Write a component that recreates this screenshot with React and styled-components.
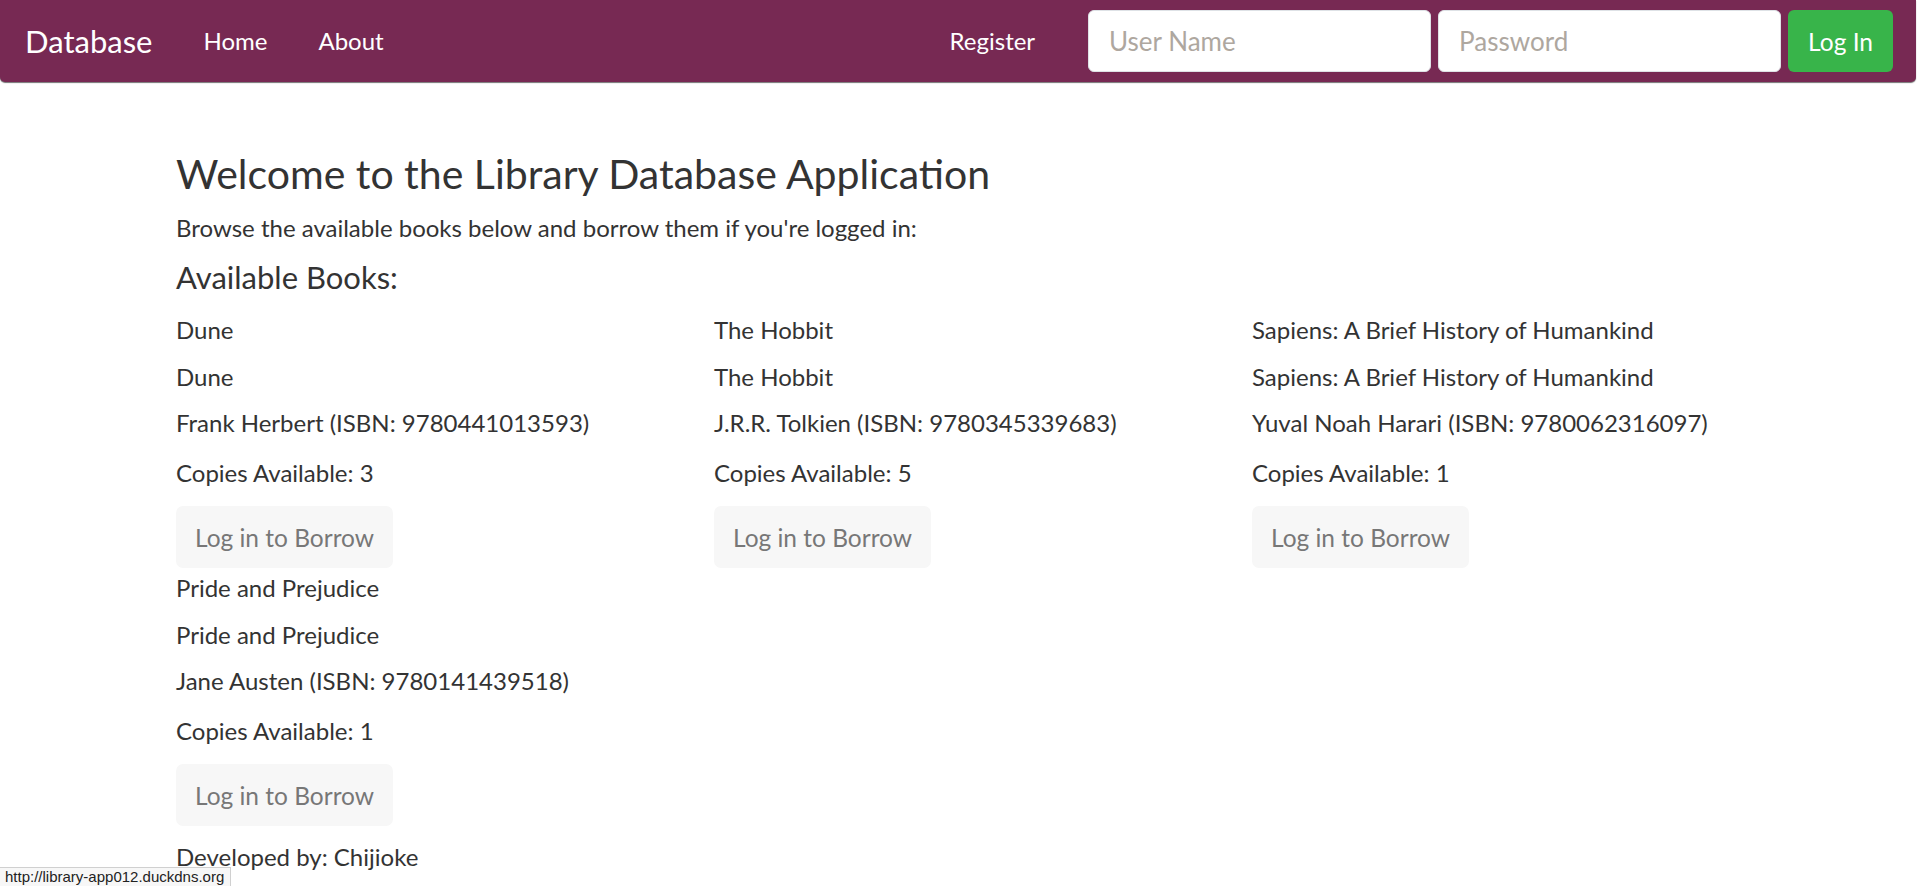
import React from 'react';
import styled, { createGlobalStyle } from 'styled-components';

// Page was captured zoomed in, so sizes below are in screen pixels.

const GlobalStyle = createGlobalStyle`
  html, body {
    margin: 0;
    padding: 0;
    background: #ffffff;
  }
  body {
    font-family: Lato, 'Open Sans', 'Noto Sans', sans-serif;
    font-size: 24px;
    line-height: 36px;
    color: #333333;
  }
  * { box-sizing: border-box; }
`;

const books = [
  { title: 'Dune', author: 'Frank Herbert', isbn: '9780441013593', copies: 3 },
  { title: 'The Hobbit', author: 'J.R.R. Tolkien', isbn: '9780345339683', copies: 5 },
  { title: 'Sapiens: A Brief History of Humankind', author: 'Yuval Noah Harari', isbn: '9780062316097', copies: 1 },
  { title: 'Pride and Prejudice', author: 'Jane Austen', isbn: '9780141439518', copies: 1 },
];

// ─── NAVBAR ──────────────────────────────────────────────

const Navbar = styled.nav`
  display: flex;
  align-items: center;
  height: 82px;
  width: calc(100% - 2px);
  padding: 0 23px 0 25px;
  background: #772953;
  border-radius: 0 0 5px 5px;
  box-shadow: 0 1px 1px rgba(0, 0, 0, 0.55);
`;

const Brand = styled.a`
  font-size: 31px;
  color: #ffffff;
  text-decoration: none;
  margin-right: 51px;
`;

const NavLinks = styled.div`
  display: flex;
  align-items: center;
  gap: 51px;
`;

const NavLink = styled.a`
  font-size: 24px;
  color: #ffffff;
  text-decoration: none;
  cursor: pointer;
`;

const LoginForm = styled.form`
  margin-left: auto;
  display: flex;
  align-items: center;
  gap: 7px;

  ${NavLink} {
    margin-right: 46px;
  }
`;

const Input = styled.input`
  width: 343px;
  height: 62px;
  padding: 0 20px;
  font-family: inherit;
  font-size: 26px;
  color: #333333;
  background: #ffffff;
  border: 1px solid #dee2e6;
  border-radius: 6px;
  outline: none;

  &::placeholder {
    color: #aea79f;
  }
`;

const LoginButton = styled.button`
  height: 62px;
  padding: 0 20px;
  font-family: inherit;
  font-size: 24.5px;
  color: #ffffff;
  background: #38b44a;
  border: none;
  border-radius: 6px;
  cursor: pointer;
`;

// ─── CONTENT ─────────────────────────────────────────────

const Container = styled.main`
  width: 1614px;
  margin-left: 176px;
  padding-top: 67px;
`;

const Title = styled.h2`
  margin: 0 0 12px 0;
  font-size: 41px;
  font-weight: 400;
  line-height: 49px;
`;

const Lead = styled.p`
  margin: 0 0 13px 0;
`;

const SectionTitle = styled.h4`
  margin: 0 0 16px 0;
  font-size: 31px;
  font-weight: 400;
  line-height: 37px;
`;

const BookGrid = styled.div`
  display: grid;
  grid-template-columns: repeat(3, 538px);
`;

const Book = styled.div`
  margin-bottom: 2px;
`;

const Line = styled.p`
  margin: 0 0 ${props => props.gap}px 0;
`;

const BorrowButton = styled.button`
  display: block;
  width: 217px;
  height: 62px;
  font-family: inherit;
  font-size: 24.5px;
  color: #777777;
  background: #f7f7f7;
  border: none;
  border-radius: 7px;
  cursor: default;
`;

const Footer = styled.p`
  margin: 11px 0 0 0;
`;

const StatusBubble = styled.div`
  position: fixed;
  left: 0;
  bottom: 0;
  height: 19px;
  padding: 0 6px 0 5px;
  font-family: 'Liberation Sans', Arial, sans-serif;
  font-size: 15px;
  line-height: 18px;
  color: #222222;
  background: #f7f7f7;
  border-top: 1px solid #d0d0d0;
  border-right: 1px solid #d0d0d0;
`;

export default function App() {
  return (
    <>
      <GlobalStyle />
      <Navbar>
        <Brand>Database</Brand>
        <NavLinks>
          <NavLink>Home</NavLink>
          <NavLink>About</NavLink>
        </NavLinks>
        <LoginForm onSubmit={e => e.preventDefault()}>
          <NavLink>Register</NavLink>
          <Input type="text" placeholder="User Name" />
          <Input type="password" placeholder="Password" />
          <LoginButton type="submit">Log In</LoginButton>
        </LoginForm>
      </Navbar>

      <Container>
        <Title>Welcome to the Library Database Application</Title>
        <Lead>Browse the available books below and borrow them if you're logged in:</Lead>
        <SectionTitle>Available Books:</SectionTitle>

        <BookGrid>
          {books.map(book => (
            <Book key={book.isbn}>
              <Line gap={11}>{book.title}</Line>
              <Line gap={10}>{book.title}</Line>
              <Line gap={14}>{book.author} (ISBN: {book.isbn})</Line>
              <Line gap={15}>Copies Available: {book.copies}</Line>
              <BorrowButton disabled>Log in to Borrow</BorrowButton>
            </Book>
          ))}
        </BookGrid>

        <Footer>Developed by: Chijioke</Footer>
      </Container>

      <StatusBubble>http://library-app012.duckdns.org</StatusBubble>
    </>
  );
}
